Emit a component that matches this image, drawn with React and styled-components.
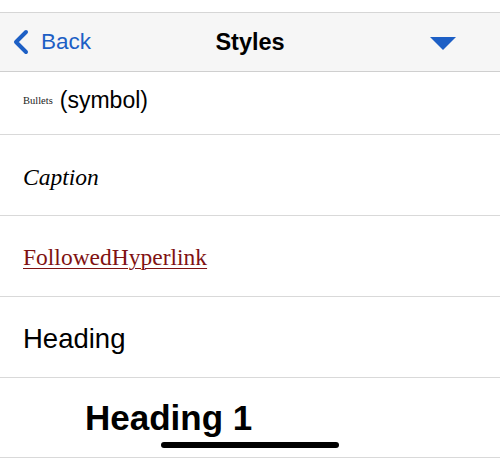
import React from "react";
import styled, { createGlobalStyle } from "styled-components";

const GlobalStyle = createGlobalStyle`
  html, body {
    margin: 0;
    padding: 0;
    background: #ffffff;
  }
  body {
    font-family: "Liberation Sans", Arial, sans-serif;
  }
`;

const Screen = styled.div`
  position: relative;
  width: 500px;
  height: 459px;
  overflow: hidden;
  background: #ffffff;
  padding-top: 12px;
  box-sizing: border-box;
`;

const NavBar = styled.div`
  height: 58px;
  display: grid;
  grid-template-columns: 1fr auto 1fr;
  align-items: center;
  background: #f6f6f6;
  border-top: 1px solid #d6d6d6;
  border-bottom: 1px solid #cfcfcf;
`;

const BackButton = styled.div`
  display: flex;
  align-items: center;
  gap: 12px;
  padding-left: 12px;
  color: #1d5fc5;
  font-size: 22.5px;
  svg {
    display: block;
  }
`;

const Title = styled.div`
  font-size: 23.5px;
  font-weight: 700;
  color: #000;
`;

const MenuToggle = styled.div`
  display: flex;
  justify-content: flex-end;
  padding-right: 44px;
  padding-top: 2px;
  svg {
    display: block;
  }
`;

const List = styled.div`
  display: flex;
  flex-direction: column;
`;

const Row = styled.div`
  height: ${({ $h }) => $h || 80}px;
  display: flex;
  align-items: center;
  padding-left: ${({ $indent }) => $indent || 23}px;
  padding-top: ${({ $drop }) => $drop || 0}px;
  padding-bottom: ${({ $lift }) => $lift || 0}px;
  box-sizing: border-box;
  border-bottom: 1px solid #d9d9d9;
  color: #000;
`;

const Small = styled.span`
  font-family: "Liberation Serif", "Times New Roman", serif;
  font-size: 10.5px;
  margin-right: 7px;
  color: #222;
`;

const Sans = styled.span`
  font-family: "Liberation Sans", Arial, sans-serif;
  font-size: ${({ $size }) => $size}px;
  font-weight: ${({ $bold }) => ($bold ? 700 : 400)};
`;

const Serif = styled.span`
  font-family: "Liberation Serif", "Times New Roman", serif;
  font-size: 23.5px;
  font-style: ${({ $italic }) => ($italic ? "italic" : "normal")};
`;

const Link = styled(Serif)`
  color: #7f1212;
  text-decoration: underline;
  text-underline-offset: 3px;
  text-decoration-thickness: 1px;
`;

const HomeIndicator = styled.div`
  position: absolute;
  left: 161px;
  top: 442px;
  width: 178px;
  height: 6px;
  border-radius: 3px;
  background: #000;
`;

export default function App() {
  return (
    <>
      <GlobalStyle />
      <Screen>
        <NavBar>
          <BackButton>
            <svg width="17" height="26" viewBox="0 0 17 26">
              <path
                d="M14 3 L4 13 L14 23"
                fill="none"
                stroke="#1d5fc5"
                strokeWidth="4"
                strokeLinecap="round"
                strokeLinejoin="round"
              />
            </svg>
            <span>Back</span>
          </BackButton>
          <Title>Styles</Title>
          <MenuToggle>
            <svg width="26" height="13" viewBox="0 0 26 13">
              <path d="M0 0 H26 L13 13 Z" fill="#1d5fc5" />
            </svg>
          </MenuToggle>
        </NavBar>
        <List>
          <Row $h={63} $lift={6}>
            <Small>Bullets</Small>
            <Sans $size={23}>(symbol)</Sans>
          </Row>
          <Row $h={81} $drop={4}>
            <Serif $italic>Caption</Serif>
          </Row>
          <Row $h={81} $drop={3}>
            <Link>FollowedHyperlink</Link>
          </Row>
          <Row $h={81} $drop={3}>
            <Sans $size={27.5}>Heading</Sans>
          </Row>
          <Row $h={80} $indent={85}>
            <Sans $size={35} $bold>
              Heading 1
            </Sans>
          </Row>
        </List>
        <HomeIndicator />
      </Screen>
    </>
  );
}
